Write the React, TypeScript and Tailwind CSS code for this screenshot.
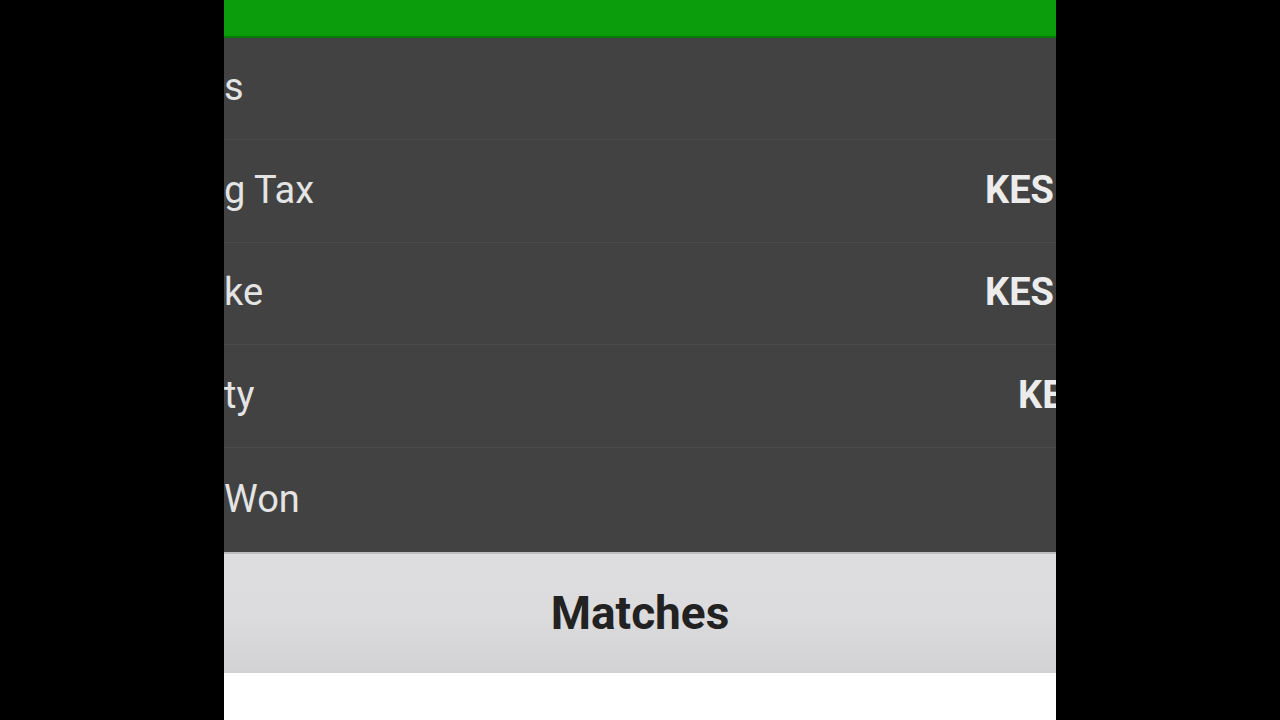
import React from 'react';

interface Row {
    label: string;
    height: string;
    value?: string;
    valueWidth?: string;
}

// Only the part of each row that shows inside the zoomed frame
const rows: Row[] = [
    { label: 's', height: 'h-[102px]' },
    { label: 'g Tax', height: 'h-[103px]', value: 'KES', valueWidth: 'w-[71px]' },
    { label: 'ke', height: 'h-[102px]', value: 'KES', valueWidth: 'w-[71px]' },
    { label: 'ty', height: 'h-[103px]', value: 'KE', valueWidth: 'w-[38px]' },
    { label: 'Won', height: 'h-[104px]' },
];

export default function App() {
    return (
        <div className="w-[1280px] h-[720px] bg-black flex justify-center overflow-hidden" style={{ fontFamily: 'Roboto, "Noto Sans", sans-serif' }}>
            <div className="w-[832px] h-full flex flex-col overflow-hidden">
                {/* Header bar */}
                <div className="h-[38px] shrink-0 bg-[#0b9d0b] border-b-2 border-[#087a08]" />

                {/* Summary rows */}
                <div className="flex flex-col bg-[#424242]">
                    {rows.map((r, i) => (
                        <div
                            key={r.label}
                            className={`${r.height} flex items-center pb-[3px] ${i < rows.length - 1 ? 'border-b border-[#4b4b4b]' : ''}`}
                        >
                            <span className="whitespace-nowrap text-[38px] text-[#e4e4e4] leading-none">{r.label}</span>
                            {r.value && (
                                <div className={`ml-auto ${r.valueWidth} shrink-0 whitespace-nowrap text-[38px] font-bold text-[#ececec] leading-none`}>
                                    {r.value}
                                </div>
                            )}
                        </div>
                    ))}
                </div>

                {/* Matches header */}
                <div className="h-[121px] shrink-0 bg-gradient-to-b from-[#dddcde] via-[#dcdbdd] to-[#d2d1d3] border-t-2 border-[#bdbdbd] flex items-center justify-center">
                    <span className="text-[46px] font-bold text-[#222]">Matches</span>
                </div>

                <div className="flex-1 bg-white" />
            </div>
        </div>
    );
}
